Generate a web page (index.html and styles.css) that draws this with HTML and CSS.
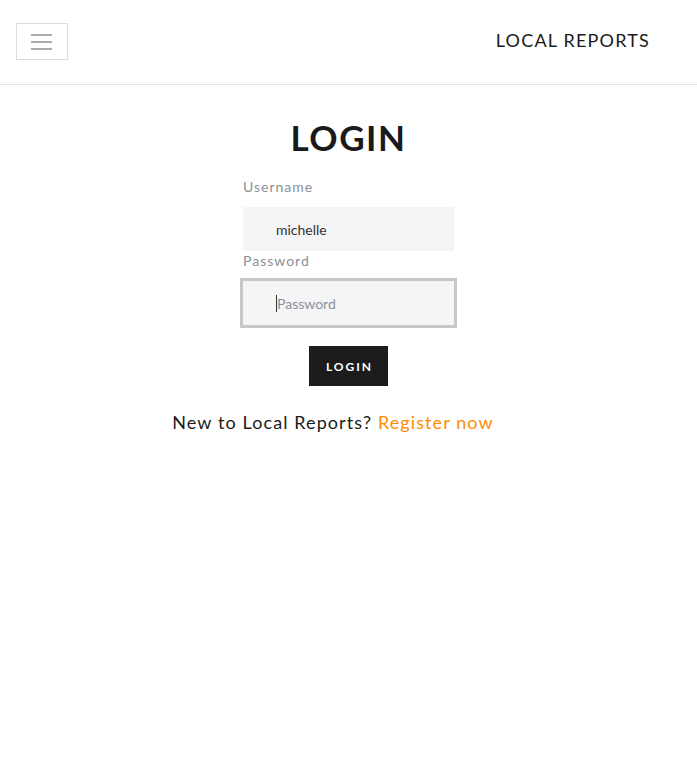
FILE: index.html
```html
<!DOCTYPE html>
<html>
<head>
<meta charset="utf-8">
<link rel="stylesheet" href="styles.css">
</head>
<body>
<header class="topbar">
  <button class="menu-btn" aria-label="menu">
    <svg width="22" height="18" viewBox="0 0 22 18"><g stroke="#aaa" stroke-width="2"><line x1="0" y1="2" x2="21" y2="2"/><line x1="0" y1="9" x2="21" y2="9"/><line x1="0" y1="16" x2="21" y2="16"/></g></svg>
  </button>
  <div class="brand">LOCAL REPORTS</div>
</header>
<main class="content">
  <h1 class="title">LOGIN</h1>
  <form class="form">
    <label class="label">Username</label>
    <div class="input">michelle</div>
    <label class="label">Password</label>
    <div class="input focused"><span class="caret"></span><span class="placeholder">Password</span></div>
    <button type="button" class="submit">LOGIN</button>
  </form>
  <p class="register">New to Local Reports? <a class="link">Register now</a></p>
</main>
</body>
</html>
```
FILE: styles.css
```css
* { box-sizing: border-box; }
body { margin: 0; font-family: "Lato", "Open Sans", sans-serif; background: #fff; color: #1a1a1a; }
.topbar { height: 85px; border-bottom: 1px solid #e3e3e3; display: flex; align-items: center; justify-content: space-between; padding: 0 47px 0 16px; }
.menu-btn { width: 52px; height: 37px; border: 1px solid #ddd; background: #fff; display: flex; align-items: center; justify-content: center; padding: 0; margin-top: -1px; }
.brand { font-size: 18px; letter-spacing: 1.2px; color: #1a1a1a; margin-top: -4px; }
.content { display: flex; flex-direction: column; align-items: center; }
.title { margin: 32px 0 0; font-size: 35px; font-weight: 700; letter-spacing: 1.5px; line-height: 40px; color: #1a1a1a; }
.form { width: 211px; display: flex; flex-direction: column; margin-top: 20px; }
.label { font-size: 14px; color: #8a9099; letter-spacing: 1px; line-height: 18px; height: 30px; padding-top: 1px; }
.input { height: 44px; background: #f5f5f7; padding-left: 33px; font-size: 14px; color: #333; display: flex; align-items: center; }
.focused { outline: 3px solid #c8c8c8; position: relative; }
.caret { width: 1px; height: 17px; background: #333; }
.placeholder { color: #8a9099; }
.submit { align-self: center; margin-top: 21px; width: 79px; height: 40px; background: #1c1c1c; color: #fff; border: 0; font-family: inherit; font-weight: 700; font-size: 12px; letter-spacing: 2px; padding: 0 0 0 2px; }
.register { margin: 25px 0 0; padding-right: 31px; font-size: 18px; letter-spacing: 1.1px; color: #1a1a1a; }
.link { color: #ff8c00; }
```
